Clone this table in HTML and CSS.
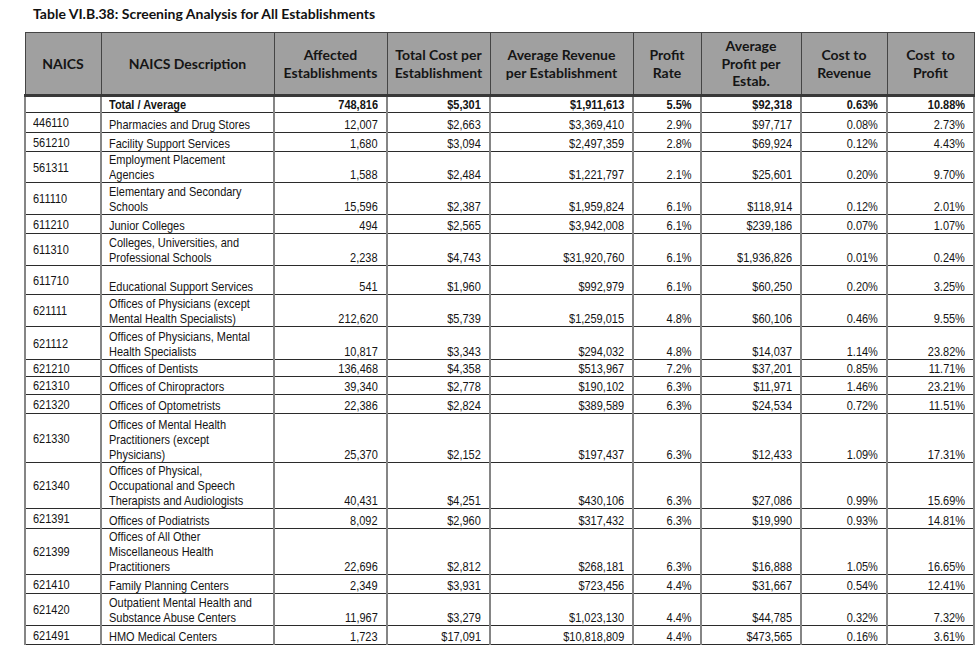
FILE: index.html
```html
<!DOCTYPE html>
<html lang="en">
<head>
<meta charset="utf-8">
<title>Table VI.B.38: Screening Analysis for All Establishments</title>
<link rel="stylesheet" href="styles.css">
</head>
<body>
<h1 class="title">Table VI.B.38: Screening Analysis for All Establishments</h1>
<table class="screen">
  <colgroup>
    <col class="c-naics">
    <col class="c-desc">
    <col class="c-aff">
    <col class="c-cost">
    <col class="c-rev">
    <col class="c-rate">
    <col class="c-prof">
    <col class="c-ctr">
    <col class="c-ctp">
  </colgroup>
  <thead>
    <tr>
      <th>NAICS</th>
      <th>NAICS Description</th>
      <th>Affected<br>Establishments</th>
      <th>Total Cost per<br>Establishment</th>
      <th>Average Revenue<br>per Establishment</th>
      <th>Profit<br>Rate</th>
      <th>Average<br>Profit per<br>Estab.</th>
      <th>Cost to<br>Revenue</th>
      <th>Cost&nbsp; to<br>Profit</th>
    </tr>
  </thead>
  <tbody>
    <tr class="total h15">
      <td class="code"></td><td class="desc"><span class="t">Total / Average</span></td><td><span class="t">748,816</span></td><td><span class="t">$5,301</span></td><td><span class="t">$1,911,613</span></td><td><span class="t">5.5%</span></td><td><span class="t">$92,318</span></td><td><span class="t">0.63%</span></td><td><span class="t">10.88%</span></td>
    </tr>
    <tr class="h19">
      <td class="code"><span class="t">446110</span></td><td class="desc"><span class="t">Pharmacies and Drug Stores</span></td><td><span class="t">12,007</span></td><td><span class="t">$2,663</span></td><td><span class="t">$3,369,410</span></td><td><span class="t">2.9%</span></td><td><span class="t">$97,717</span></td><td><span class="t">0.08%</span></td><td><span class="t">2.73%</span></td>
    </tr>
    <tr class="h18">
      <td class="code"><span class="t">561210</span></td><td class="desc"><span class="t">Facility Support Services</span></td><td><span class="t">1,680</span></td><td><span class="t">$3,094</span></td><td><span class="t">$2,497,359</span></td><td><span class="t">2.8%</span></td><td><span class="t">$69,924</span></td><td><span class="t">0.12%</span></td><td><span class="t">4.43%</span></td>
    </tr>
    <tr class="h30">
      <td class="code"><span class="t">561311</span></td><td class="desc"><span class="t">Employment Placement<br>Agencies</span></td><td><span class="t">1,588</span></td><td><span class="t">$2,484</span></td><td><span class="t">$1,221,797</span></td><td><span class="t">2.1%</span></td><td><span class="t">$25,601</span></td><td><span class="t">0.20%</span></td><td><span class="t">9.70%</span></td>
    </tr>
    <tr class="h31">
      <td class="code"><span class="t">611110</span></td><td class="desc"><span class="t">Elementary and Secondary<br>Schools</span></td><td><span class="t">15,596</span></td><td><span class="t">$2,387</span></td><td><span class="t">$1,959,824</span></td><td><span class="t">6.1%</span></td><td><span class="t">$118,914</span></td><td><span class="t">0.12%</span></td><td><span class="t">2.01%</span></td>
    </tr>
    <tr class="h18">
      <td class="code"><span class="t">611210</span></td><td class="desc"><span class="t">Junior Colleges</span></td><td><span class="t">494</span></td><td><span class="t">$2,565</span></td><td><span class="t">$3,942,008</span></td><td><span class="t">6.1%</span></td><td><span class="t">$239,186</span></td><td><span class="t">0.07%</span></td><td><span class="t">1.07%</span></td>
    </tr>
    <tr class="h31">
      <td class="code"><span class="t">611310</span></td><td class="desc"><span class="t">Colleges, Universities, and<br>Professional Schools</span></td><td><span class="t">2,238</span></td><td><span class="t">$4,743</span></td><td><span class="t">$31,920,760</span></td><td><span class="t">6.1%</span></td><td><span class="t">$1,936,826</span></td><td><span class="t">0.01%</span></td><td><span class="t">0.24%</span></td>
    </tr>
    <tr class="h28">
      <td class="code"><span class="t">611710</span></td><td class="desc"><span class="t">Educational Support Services</span></td><td><span class="t">541</span></td><td><span class="t">$1,960</span></td><td><span class="t">$992,979</span></td><td><span class="t">6.1%</span></td><td><span class="t">$60,250</span></td><td><span class="t">0.20%</span></td><td><span class="t">3.25%</span></td>
    </tr>
    <tr class="h31">
      <td class="code"><span class="t">621111</span></td><td class="desc"><span class="t">Offices of Physicians (except<br>Mental Health Specialists)</span></td><td><span class="t">212,620</span></td><td><span class="t">$5,739</span></td><td><span class="t">$1,259,015</span></td><td><span class="t">4.8%</span></td><td><span class="t">$60,106</span></td><td><span class="t">0.46%</span></td><td><span class="t">9.55%</span></td>
    </tr>
    <tr class="h32">
      <td class="code"><span class="t">621112</span></td><td class="desc"><span class="t">Offices of Physicians, Mental<br>Health Specialists</span></td><td><span class="t">10,817</span></td><td><span class="t">$3,343</span></td><td><span class="t">$294,032</span></td><td><span class="t">4.8%</span></td><td><span class="t">$14,037</span></td><td><span class="t">1.14%</span></td><td><span class="t">23.82%</span></td>
    </tr>
    <tr class="h16">
      <td class="code"><span class="t">621210</span></td><td class="desc"><span class="t">Offices of Dentists</span></td><td><span class="t">136,468</span></td><td><span class="t">$4,358</span></td><td><span class="t">$513,967</span></td><td><span class="t">7.2%</span></td><td><span class="t">$37,201</span></td><td><span class="t">0.85%</span></td><td><span class="t">11.71%</span></td>
    </tr>
    <tr class="h17">
      <td class="code"><span class="t">621310</span></td><td class="desc"><span class="t">Offices of Chiropractors</span></td><td><span class="t">39,340</span></td><td><span class="t">$2,778</span></td><td><span class="t">$190,102</span></td><td><span class="t">6.3%</span></td><td><span class="t">$11,971</span></td><td><span class="t">1.46%</span></td><td><span class="t">23.21%</span></td>
    </tr>
    <tr class="h18">
      <td class="code"><span class="t">621320</span></td><td class="desc"><span class="t">Offices of Optometrists</span></td><td><span class="t">22,386</span></td><td><span class="t">$2,824</span></td><td><span class="t">$389,589</span></td><td><span class="t">6.3%</span></td><td><span class="t">$24,534</span></td><td><span class="t">0.72%</span></td><td><span class="t">11.51%</span></td>
    </tr>
    <tr class="h48">
      <td class="code"><span class="t">621330</span></td><td class="desc"><span class="t">Offices of Mental Health<br>Practitioners (except<br>Physicians)</span></td><td><span class="t">25,370</span></td><td><span class="t">$2,152</span></td><td><span class="t">$197,437</span></td><td><span class="t">6.3%</span></td><td><span class="t">$12,433</span></td><td><span class="t">1.09%</span></td><td><span class="t">17.31%</span></td>
    </tr>
    <tr class="h45">
      <td class="code"><span class="t">621340</span></td><td class="desc"><span class="t">Offices of Physical,<br>Occupational and Speech<br>Therapists and Audiologists</span></td><td><span class="t">40,431</span></td><td><span class="t">$4,251</span></td><td><span class="t">$430,106</span></td><td><span class="t">6.3%</span></td><td><span class="t">$27,086</span></td><td><span class="t">0.99%</span></td><td><span class="t">15.69%</span></td>
    </tr>
    <tr class="h19">
      <td class="code"><span class="t">621391</span></td><td class="desc"><span class="t">Offices of Podiatrists</span></td><td><span class="t">8,092</span></td><td><span class="t">$2,960</span></td><td><span class="t">$317,432</span></td><td><span class="t">6.3%</span></td><td><span class="t">$19,990</span></td><td><span class="t">0.93%</span></td><td><span class="t">14.81%</span></td>
    </tr>
    <tr class="h45">
      <td class="code"><span class="t">621399</span></td><td class="desc"><span class="t">Offices of All Other<br>Miscellaneous Health<br>Practitioners</span></td><td><span class="t">22,696</span></td><td><span class="t">$2,812</span></td><td><span class="t">$268,181</span></td><td><span class="t">6.3%</span></td><td><span class="t">$16,888</span></td><td><span class="t">1.05%</span></td><td><span class="t">16.65%</span></td>
    </tr>
    <tr class="h18">
      <td class="code"><span class="t">621410</span></td><td class="desc"><span class="t">Family Planning Centers</span></td><td><span class="t">2,349</span></td><td><span class="t">$3,931</span></td><td><span class="t">$723,456</span></td><td><span class="t">4.4%</span></td><td><span class="t">$31,667</span></td><td><span class="t">0.54%</span></td><td><span class="t">12.41%</span></td>
    </tr>
    <tr class="h31">
      <td class="code"><span class="t">621420</span></td><td class="desc"><span class="t">Outpatient Mental Health and<br>Substance Abuse Centers</span></td><td><span class="t">11,967</span></td><td><span class="t">$3,279</span></td><td><span class="t">$1,023,130</span></td><td><span class="t">4.4%</span></td><td><span class="t">$44,785</span></td><td><span class="t">0.32%</span></td><td><span class="t">7.32%</span></td>
    </tr>
    <tr class="h18">
      <td class="code"><span class="t">621491</span></td><td class="desc"><span class="t">HMO Medical Centers</span></td><td><span class="t">1,723</span></td><td><span class="t">$17,091</span></td><td><span class="t">$10,818,809</span></td><td><span class="t">4.4%</span></td><td><span class="t">$473,565</span></td><td><span class="t">0.16%</span></td><td><span class="t">3.61%</span></td>
    </tr>
  </tbody>
</table>
</body>
</html>
```

FILE: styles.css
```css
html, body {
  margin: 0;
  padding: 0;
  background: #ffffff;
}

.title {
  margin: 0;
  padding: 5px 0 0 33px;
  font-family: Lato, "Open Sans", sans-serif;
  font-weight: 700;
  font-size: 14px;
  line-height: 18px;
  color: #111111;
}

.screen {
  border-collapse: collapse;
  table-layout: fixed;
  width: 949px;
  margin: 9px 0 0 24px;
  font-family: "Liberation Sans", Arial, sans-serif;
  font-size: 13px;
  color: #141414;
}

.c-naics { width: 76px; }
.c-desc  { width: 173px; }
.c-aff   { width: 113px; }
.c-cost  { width: 103px; }
.c-rev   { width: 143px; }
.c-rate  { width: 68px; }
.c-prof  { width: 100px; }
.c-ctr   { width: 86px; }
.c-ctp   { width: 87px; }

.screen th {
  height: 61px;
  padding: 0 2px;
  background: #a0a0a0;
  border: 1px solid #454545;
  border-bottom: 3px solid #383838;
  font-family: Lato, "Open Sans", sans-serif;
  font-weight: 700;
  font-size: 14px;
  line-height: 17.5px;
  color: #151515;
  text-align: center;
  vertical-align: middle;
}

.screen td {
  padding: 0 8px 0 7px;
  border-top: 1px solid #2b2b2b;
  border-bottom: 1px solid #2b2b2b;
  border-left: 2px solid #858585;
  border-right: 2px solid #858585;
  line-height: 15px;
  text-align: right;
  vertical-align: bottom;
  white-space: nowrap;
}

.screen td .t {
  display: inline-block;
  transform: scaleX(0.845);
  transform-origin: right bottom;
}

.screen td.code,
.screen td.desc {
  text-align: left;
}

.screen td.code {
  vertical-align: middle;
}

.screen td.code .t,
.screen td.desc .t {
  transform-origin: left bottom;
}

.screen tr.total td {
  font-weight: 700;
}

.screen tr.h15 td { height: 15px; }
.screen tr.h16 td { height: 16px; }
.screen tr.h17 td { height: 17px; }
.screen tr.h18 td { height: 18px; }
.screen tr.h19 td { height: 19px; }
.screen tr.h28 td { height: 28px; }
.screen tr.h30 td { height: 30px; }
.screen tr.h31 td { height: 31px; }
.screen tr.h32 td { height: 32px; }
.screen tr.h45 td { height: 45px; }
.screen tr.h48 td { height: 48px; }
```
